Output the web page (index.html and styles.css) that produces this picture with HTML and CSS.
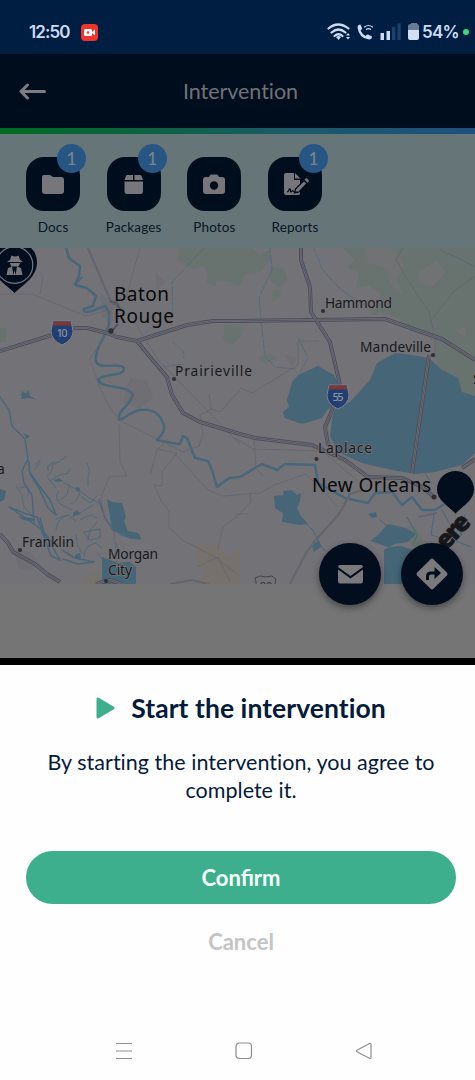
FILE: index.html
```html
<!DOCTYPE html>
<html lang="en">
<head>
<meta charset="utf-8">
<title>Intervention</title>
<link rel="stylesheet" href="styles.css">
</head>
<body>
<main class="phone">
  <div class="status">
    <span class="clock">12:50</span>
    <svg class="rec" width="17" height="17" viewBox="0 0 17 17"><rect width="17" height="17" rx="4" fill="#f0352f"/><rect x="3" y="5" width="8" height="7" rx="1.500" fill="#fff"/><path d="M11 8l3-2.500v6L11 9z" fill="#fff"/><circle cx="7" cy="8.500" r="1.200" fill="#f0352f"/></svg>
    <svg class="signals" width="94" height="20" viewBox="327 22 94 20">
      <g fill="none" stroke="#cddcf2" stroke-width="2.200" stroke-linecap="round"><path d="M328.500 28.500q9.500-8 20 0M331.500 32.500q7-6 14 0M334.500 36q4-3.500 8 0"/><path d="M364.500 27q4-3 8 0M366.500 29.300q2-1.500 4 0" stroke-width="1.200"/></g>
      <path d="M336 37q2.500-2 5 0l-2.500 3zM346 35.500l2-2.500 2 2.500zM346 37l2 2.500 2-2.500z" fill="#cddcf2"/>
      <path d="M358 25.500l2-1q1 0 2 4 0 1-1.500 2 2 4 5 5.500 1.500-2 2.500-1.500l4 2q0 3-3 3-10-1-11.500-12z" fill="#cddcf2"/>
      <path d="M380.500 33h3.500v7h-3.500zM386.500 31h3.500v9h-3.500z" fill="#cddcf2"/><path d="M392 27h3.300v13H392zM397.500 23.500h3.200V40h-3.200z" fill="#1c426f"/>
      <path d="M411 24v-1h6v1q2 0 2 2v5h-11v-5q0-2 3-2z" fill="#647c98"/><path d="M408 30h11v8q0 2-2 2h-7q-2 0-2-2z" fill="#d3e0f4"/>
    </svg>
    <span class="battery">54%</span><i class="live"></i>
  </div>
  <header class="header">
    <svg width="28" height="20" viewBox="0 0 28 20"><path d="M25.500 10.500H2.500M8.500 4L2 10.500 8.500 17" fill="none" stroke="#7b7d83" stroke-width="3" stroke-linecap="round" stroke-linejoin="round"/></svg>
    <h1>Intervention</h1>
  </header>
  <div class="stripe"></div>
  <nav class="tools">
    <div class="tool"><div class="tile"><svg width="54" height="54" viewBox="0 0 54 54"><path d="M16 20q0-2 2-2h6l3 2h8q3 0 3 3v11q0 3-3 3H19q-3 0-3-3z" fill="#77777b"/></svg><b class="badge">1</b></div><span>Docs</span></div>
    <div class="tool"><div class="tile"><svg width="54" height="54" viewBox="0 0 54 54"><path d="M20 18h6v5h-8.500l1-3q.5-2 1.500-2zM27.500 18H33q1.500 0 2 2l1 3h-8.500zM17.500 24.500H36V34q0 3-2.500 3H20q-2.500 0-2.500-3z" fill="#77777b"/></svg><b class="badge">1</b></div><span>Packages</span></div>
    <div class="tool"><div class="tile"><svg width="54" height="54" viewBox="0 0 54 54"><path d="M18 20h4q1-2.500 2-2.500h6q1 0 2 2.500h3q3 0 3 2.500V34q0 3-3 3H19q-3 0-3-3V22.500q0-2.500 2-2.500z" fill="#77777b"/><circle cx="27" cy="28.500" r="4.200" fill="#000d1d"/></svg></div><span>Photos</span></div>
    <div class="tool"><div class="tile"><svg width="54" height="54" viewBox="0 0 54 54"><path d="M18 16h8v7h6v14q-1 1-2 1H18q-2 0-2-2V18q0-2 2-2zM27 16l5.500 5.500H27z" fill="#77777b"/><path d="M27.500 32L36 23.500l3 3L31 35l-4.500 1z" fill="#77777b" stroke="#000d1d" stroke-width="1.200"/><path d="M36.500 22.500l.8-.8q1.200-1 2.700.5t.5 2.500l-1 1z" fill="#77777b"/><path d="M19 35c2 0 2-4 3-3s0 3 1 3 1-2 2-1 0 1.500 5 1" fill="none" stroke="#000d1d" stroke-width="1.200"/></svg><b class="badge">1</b></div><span>Reports</span></div>
  </nav>
  <section class="map">
    <svg class="chart" width="475" height="336" viewBox="0 248 475 336">
      <rect y="248" width="475" height="336" fill="#737276"/>
      <g fill="#66736d" opacity=".8">
        <path d="M178 248h74l8 7 10-5v10l-10 12-15 2-5 12-16-6-14 2-5-16-12 3-14-7zM271 267l13 2 4 12-9 6-9-7zM273 291l8-2-2 9-7 3zM225 325l20 3-4 8-9 9-9-6zM208 276l8 2v8l-9-3zM257 358l12-5 8 5-11 5z"/>
        <path d="M343 248h132v148l-13-4-5-15-15-7-9-13 2-14-9-7-14-4-13-14-19-6-6 4-9-11 13 2 3-13-13-9-12 4 3-16-12-6 8-7-9-9z"/><path d="M0 328h6v14H0zM395 530l20-4 10 18-8 4z"/>
      </g>
      <path d="M365 248h30l9 16-8 15 8 18-13-12-4-16-19-6zM418 273l18-12 10 11-14 15-12-4zM350 295l10-3 12 7-9 5zM455 330l12-4-2 12z" fill="#737276" opacity=".85"/>
      <path d="M197 544l20 1 13 12 10-10v37h-40l4-14-8-10zM85 576l14-4 4 12H80z" fill="#77716e"/>
      <path d="M130 378l17 3 6 17-14 11-16-7zM12 548l20 5 10 14-22 3zM101 295l12 5v24l-12-8zM155 272l10 10-8 8zM285 355l12 3-5 8z" fill="#6f6e73"/>
      <g fill="#466577">
        <path d="M370 380l7-17 18-10 17 2 17 3 13 12 16 8 4 14 13 4v57l-13 12-27 7-20 2-23-4-30-7-24-11-8-16 2-17 3-10 15-7z"/>
        <path d="M318 366l-20 9-6 7-5 18 2 7-6 5 2 6 17 6 20-6 6-9 11-8 2-12-7-14z"/>
        <path d="M107 499l5 3 10 1 4 14-2 4 4 10 10 2 4 6-14-1-16-9zM102 557l16 6 12-1 6 5v17h-34zM0 489l6 2-2 9-4 2zM274 496l10-1-1-4 9-1 5 5 4-2-1 8-3 7 4 8 7 8-8 1-18-3 1-9-8-5zM378 535l10-11 18 4 10 6-8 8-14 2-10 6v34h29v-34l-12-4-13 1-18-6zM22 391l4 3 2-4 2 6 7 4-8-2-8 1zM23 433l7 3-3 3zM312 546l7-6 2 7-7 5zM455 523l7-4 4 8-5 8zM368 514l8-2 1 5-5 1zM73 513l4-3 3 4-7 2zM76 487l4 1v4l-4-1zM75 555l5-2 1 5-6 1zM54 480l5-2 4 3-6 1zM18 516l18 3-3 2-10-1z"/>
      </g>
      <g fill="none" stroke="#48677a" stroke-linejoin="round" stroke-linecap="round">
        <path stroke-width="2.500" d="M66 247L69 258L80 266 79 276 75 285 87 288 96 296 93 306 84 309Q82 313 92 311L105 306 109 312V325C104 340 94 350 96 362C100 370 120 362 124 368C124 378 103 372 98 380C104 390 128 384 133 395C128 408 118 410 119 419C122 422 128 412 140 410C155 408 160 415 164 425C166 433 158 438 157 440L172 443 180 444 183 436 187 438 195 458 208 461 212 470 217 487 229 478 240 477 262 464 277 470 285 464 315 465 318 483 345 498 368 503 375 493 392 492 402 505 412 497 422 510 435 510 443 505"/>
        <path d="M75 285l7-8M0 397l9 13 3 16 13 13 3 20-6 12 2 12 8 12 2 28M40 518l4 14 9 12" stroke-width="1.400"/>
        <path d="M29 461v10l8 12 13 17 6 15-8-7-9-20-9-14zM9 507l15 6 13 4 6 16 9 13 8 14-9-4-10-27-17-12zM62 550l13 8 19 4-16 2-15-5M99 500l6 18 8 12 18 8" stroke-width="1.500"/>
        <path d="M47 476q7-5 5-11l8-4M52 480q7-7 15-6l3-5M56 488l-8-10M58 491q-4 10 4 14l10 5M63 482q10 6 16 8l10 8 10 5M69 487l-2 8-7 5M80 493q-3 9-9 11M82 497l8 6 7-7M87 463q4 8 1 15v8M61 460l6-4M35 469l5-7M48 470q-2-5 6-8M40 460l-5 5M16 486l6 9 2 12 8 8M20 488q10-5 8 7M71 518l14-8 8-5M56 519l12-4 8 6M56 530q1-12 12-15M80 520l10-5 7 3M84 532l16-3v9l-10 2zM88 540l2-10 7-8M76 535l2 12 4 6M84 557q0-12 12-14l6 5M98 553q3 8 12 9M116 543q5 12 11 15M120 535q11 3 20 5" stroke-width=".8"/>
        <path d="M270 248l2 22-13 28 3 31 3 27 10 11 20 2M204 248l-32 34 1 32M173 342l10 9 1 8M165 367l18-3M314 248l8 21 16 18 17 13M440 250l22 10 13 7M300 372l8-14-9-19" stroke-width=".7" stroke-dasharray="5 2 3 1"/>
        <path d="M304 522l9 8 6 13 6 8M380 520l12 10M407 517l10 18-4 10M442 510l10 18-6 9 16-2M465 515l-12 25 18 7M429 480l-8-15M434 515l-3 20 16 5" stroke-width="1"/>
      </g>
      <g fill="none" stroke="#65656d" stroke-width=".8">
        <path d="M0 294h32l54 22 22-6M40 294l3-17-4-6M140 248l-8 28-6 24M89 360l17-25 3-20M91 363l9 25 11 22 12 12 60 30 16-6 4-12-3-19 12-6M135 322l23 38 82 84M119 424l1 38 7 14-18 1-8 20 3 18 10 18 4 40M157 449l20 4-15 19 0 14-8-1 7 15 8 12v15l12 12 35 19 20 15M166 442l-9 8-7 25M175 454l33 36 15 6 37-3 14-8 32-11 18 18 14 15M254 440l2 28 7 8M235 438l18 11 69 2 36 30M240 513l11-11-1-9M235 514h13M240 390l-20 22-9-3-2-14M240 388l12 5 10-6 36-22v-24h21M403 248l-7 11 11 20 22 33 6 25 0 20M432 319l22-28 21-15M218 549l5-22 17-13M197 567l21-10 12 24"/>
        <path stroke-width="2.200" d="M88 248l23 54 10 7M339 514l11-20 13-4M339 514l-25 28-8 11-13 25-4 8M170 584l22-4 17 4M419 517l18-4"/>
      </g>
      <g fill="none" stroke-linejoin="round">
        <g stroke="#4e4e5b" stroke-width="4"><path id="r1" d="M0 351L52 335 75 328 87 328 107 333 117 337 137 341 187 325 213 321H240L385 319 442 339 475 360"/><path id="r2" d="M137 341L150 357 167 377 172 395 183 413 200 422 240 434 255 438 312 445 345 460 368 477 402 478 422 487 435 498"/><path id="r3" d="M301 247V260L310 287 311 312 330 342 340 385 331 413 325 427 328 445"/><path id="r4" d="M429 355L412 473M0 534l8 9 5 9 22 12 12 10 13 8M96 584l14-4 12 4M462 468l13-9"/></g>
        <path d="M111 332l7-8M120 309l-3-6-7-2" stroke="#55555f" stroke-width="2"/>
        <g stroke="#77777f" stroke-width="1.900"><use href="#r1"/><use href="#r2"/><use href="#r3"/><use href="#r4"/></g>
        <g stroke="#4c4c58" stroke-width=".8"><use href="#r1"/><use href="#r2"/><use href="#r3"/><use href="#r4"/></g>
      </g>
      <g class="shield"><path d="M53 321h18l2 10q0 9-11 14-11-5-11-14z" fill="#213f73" stroke="#7d8087"/><path d="M53.500 321.500h17l.8 4H52.700z" fill="#7c3836"/><text x="62" y="337" textLength="11">10</text></g>
      <g class="shield"><path d="M329 385h18l2 10q0 9-11 14-11-5-11-14z" fill="#213f73" stroke="#7d8087"/><path d="M329.500 385.500h17l.8 4h-18.600z" fill="#7c3836"/><text x="338" y="401" textLength="11">55</text></g>
      <g fill="#2e2f33"><circle cx="111" cy="331" r="2.700"/><circle cx="174" cy="379" r="2"/><circle cx="323" cy="311" r="2"/><circle cx="433" cy="355" r="2"/><circle cx="316.500" cy="459" r="2"/><circle cx="20" cy="550" r="2"/><circle cx="106" cy="581" r="2"/><circle cx="434" cy="497" r="2.500"/></g>
      <g class="city large"><text x="114" y="300.500" textLength="55">Baton</text><text x="114" y="323" textLength="60">Rouge</text><text x="312" y="492" textLength="119">New Orleans</text></g>
      <g class="city"><text x="175" y="376" textLength="77">Prairieville</text><text x="325" y="308" textLength="67">Hammond</text><text x="360" y="352" textLength="71">Mandeville</text><text x="318" y="453" textLength="54">Laplace</text><text x="22" y="547" textLength="52">Franklin</text><text x="108" y="559" textLength="50">Morgan</text><text x="108" y="575" textLength="24">City</text><text x="-3" y="474">a</text><text x="473" y="384">S</text></g>
      <path d="M256 584v-2l-1-4 5-2 6 1 6-1 4 3-1 5" fill="none" stroke="#44454a"/><text class="route" x="266" y="590">90</text>
      <text class="here" transform="translate(446 551) rotate(-47)">ere</text>
      <path d="M14.500 293C4 283-8 277-8 262q1-19 22.500-19T37 262c0 15-12 21-22.500 31z" fill="#020d1d"/>
      <circle cx="14.500" cy="265" r="18.300" fill="none" stroke="#74777c" stroke-width="1.200"/>
      <path d="M10 260l1.500-4.500q3.500 2 7 0L20 260l3 1.500-3 1v1l-1.500 3h-7l-1.500-3v-1l-3-1zM6.500 275l1.500-7 4-1.500 1.500 8.500 1-5 1 5 1.500-8.500 4 1.500 1.500 7z" fill="#77787c"/><path d="M9 262.500h11" stroke="#020d1d"/>
      <path d="M455.500 514c-8-8-19-14-19-24.500a19 19 0 0138 0c0 10.500-11 16.500-19 24.500z" fill="#020d1d" stroke="#74777c"/>
    </svg>
    <div class="actions">
      <span class="action"><svg width="62" height="62" viewBox="0 0 62 62"><path d="M21 22h21q2 0 2 2L31.500 33 19 24q0-2 2-2z" fill="#7a7a7d"/><path d="M19 26.500L31.500 35.500 44 26.500V38q0 2.500-2 2.500H21q-2 0-2-2.500z" fill="#7a7a7d"/></svg></span>
      <span class="action"><svg width="62" height="62" viewBox="0 0 62 62"><rect x="19.500" y="19.500" width="23" height="23" rx="2" transform="rotate(45 31 31)" fill="#7a7a7d"/><path d="M26.500 37v-3.500q0-3.500 3.500-3.500h5" fill="none" stroke="#020d1d" stroke-width="3"/><path d="M33.500 24l6.500 6-6.500 6z" fill="#020d1d"/></svg></span>
    </div>
  </section>
  <section class="sheet">
    <h2><svg width="19" height="22" viewBox="0 0 19 22"><path d="M2 2v18L17 11z" fill="#3eaf8d" stroke="#3eaf8d" stroke-width="3" stroke-linejoin="round"/></svg><span>Start the intervention</span></h2>
    <p><span>By starting the intervention, you agree to</span><br><span>complete it.</span></p>
    <button class="confirm">Confirm</button>
    <button class="cancel">Cancel</button>
    <div class="sysnav">
      <svg width="18" height="18" viewBox="0 0 18 18"><path d="M1 1.500h16M1 9h16M1 16.500h16"/></svg>
      <svg width="18" height="18" viewBox="0 0 18 18"><rect x="1" y="1" width="15.500" height="15.500" rx="3.500"/></svg>
      <svg width="18" height="18" viewBox="0 0 18 18"><path d="M16 2.500v13q0 1.500-1.500.8L2.300 10q-1.600-1 0-2L14.500 1.500Q16 1 16 2.500z"/></svg>
    </div>
  </section>
</main>
</body>
</html>
```

FILE: styles.css
```css
* { box-sizing: border-box; }
body { margin: 0; font-family: Lato, sans-serif; background: #fff; }
.phone { width: 475px; height: 1080px; overflow: hidden; display: flex; flex-direction: column; }
.status { height: 54px; flex: none; background: #001e41; color: #cddcf2; display: flex; align-items: center; padding: 10px 6px 0 29px; font: 600 17px Inter, sans-serif; }
.clock { width: 52px; letter-spacing: -.9px; }
.signals { margin-left: auto; }
.battery { width: 38px; margin-left: 1px; font-size: 17px; letter-spacing: -.8px; }
.live { width: 6px; height: 6px; border-radius: 50%; background: #38da7c; margin-left: 3px; }
.header { height: 74px; flex: none; background: #000d1c; display: grid; grid-template-columns: 28px 1fr 28px; align-items: center; padding: 0 13px 0 19px; }
.header h1 { margin: 0; text-align: center; font-size: 21.500px; font-weight: 400; line-height: 30px; color: #707277; letter-spacing: -.05px; }
.stripe { height: 6px; flex: none; background: linear-gradient(90deg, #006b24, #0d6146 35%, #1a5a67 60%, #1f4f7c); }
.tools { height: 114px; flex: none; background: #657578; display: flex; padding: 23px 0 0 12.700px; }
.tool { width: 80.700px; display: flex; flex-direction: column; align-items: center; gap: 7px; font-size: 13.500px; line-height: 18px; color: #071525; letter-spacing: .15px; }
.tile { position: relative; width: 54px; height: 54px; border-radius: 18px; background: #000d1d; }
.badge { position: absolute; left: 31px; top: -13px; width: 29px; height: 29px; border-radius: 50%; background: #275685; color: #7c8389; font-weight: 500; font-size: 17px; line-height: 29px; text-align: center; }
.map { position: relative; height: 417px; flex: none; background: #757575; border-bottom: 7px solid #000; }
.chart { display: block; }
.city { font-family: "Noto Sans", sans-serif; font-size: 13.800px; fill: #18191c; stroke: #747377; stroke-width: 1.500px; paint-order: stroke; }
.large { font-size: 19px; fill: #08090a; stroke: none; }
.shield text { font: 500 11px "Noto Sans", sans-serif; fill: #8b929d; text-anchor: middle; }
.route { font: 11px "Noto Sans", sans-serif; text-anchor: middle; fill: #333; }
.here { font: 900 25px "Noto Sans", sans-serif; fill: #171719; stroke: #171719; stroke-width: .7px; letter-spacing: -2px; }
.actions { position: absolute; left: 319px; top: 295px; display: flex; gap: 20px; }
.action { width: 62px; height: 62px; border-radius: 50%; background: #020d1d; box-shadow: 0 3px 7px #0006; }
.sheet { flex: 1; background: #fefefe; padding: 25px 19px 0 26px; display: flex; flex-direction: column; color: #041b3b; text-align: center; }
.sheet h2 { margin: 0; height: 36px; display: flex; justify-content: center; align-items: center; gap: 16px; font-size: 26.500px; font-weight: 700; letter-spacing: .05px; }
.sheet p { margin: 22px 0 0; height: 56px; font-size: 21.500px; line-height: 28px; letter-spacing: .03px; white-space: nowrap; }
.sheet button { border: 0; padding: 0; font: 700 22px Lato, sans-serif; flex: none; }
.confirm { margin-top: 47px; height: 53px; border-radius: 27px; background: #3eaf8d; color: #f5fffc; }
.sheet .cancel { margin-top: 21px; height: 32px; background: none; color: #c4c4c4; }
.sysnav { display: flex; justify-content: space-between; width: 258px; margin: 85px 0 0 88.500px; }
.sysnav svg { fill: none; stroke: #8d8d8d; stroke-width: 1.200px; }
```
